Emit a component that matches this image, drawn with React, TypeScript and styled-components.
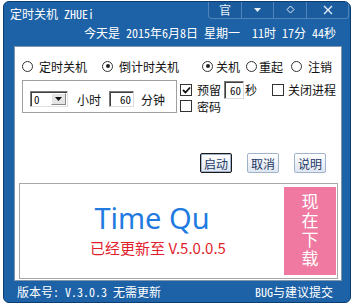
import React from "react";
import styled, { createGlobalStyle } from "styled-components";

const FONT = `"Noto Sans Mono CJK SC", "Noto Sans CJK SC", "DejaVu Sans Mono", monospace`;

const Global = createGlobalStyle`
  html, body { margin: 0; padding: 0; background: #ffffff; }
  body { font-family: ${FONT}; font-size: 12px; }
  * { box-sizing: border-box; }
`;

const Window = styled.div`
  margin: 1px 0 0 3px;
  width: 348px;
  height: 302px;
  background: #1d62a7;
  border: 1px solid #0c3d70;
  border-radius: 6px 7px 6px 6px;
  display: flex;
  flex-direction: column;
  overflow: hidden;
  color: #fff;
`;

const TitleBar = styled.div`
  display: flex;
  height: 21px;
`;

const Title = styled.div`
  padding: 1px 0 0 6px;
  line-height: 21px;
  font-size: 12px;
`;

const CtrlGroup = styled.div`
  margin-left: auto;
  margin-right: 1px;
  margin-top: -2px;
  height: 19px;
  display: flex;
  border: 1px solid #4f84bb;
  border-top: none;
  border-radius: 0 0 3px 4px;
  background: #1b5c9e;
`;

const CtrlBtn = styled.div<{ $w: number; $last?: boolean }>`
  width: ${(p) => p.$w}px;
  display: flex;
  align-items: center;
  justify-content: center;
  border-right: ${(p) => (p.$last ? "none" : "1px solid #4f84bb")};
  font-size: 12px;
  color: #e8f0fa;
  padding-top: 1px;
`;

const DateRow = styled.div`
  height: 23px;
  line-height: 20px;
  text-align: right;
  padding-right: 14px;
  white-space: pre;
`;

const Panel = styled.div`
  margin: 0 8px 0 10px;
  height: 235px;
  background: #fff;
  border: 1px solid #7f96ad;
  color: #111;
  display: flex;
  flex-direction: column;
`;

const RadioRow = styled.div`
  display: flex;
  align-items: center;
  height: 14px;
  margin-top: 12px;
  padding-left: 7px;
`;

const Option = styled.label<{ $ml?: number; $gap?: number }>`
  display: flex;
  align-items: center;
  gap: ${(p) => p.$gap ?? 5}px;
  margin-left: ${(p) => p.$ml ?? 0}px;
  white-space: pre;
`;

const RadioDot = styled.span<{ $on?: boolean }>`
  width: 11px;
  height: 11px;
  border-radius: 50%;
  border: 1px solid #333;
  background: #fff;
  display: flex;
  align-items: center;
  justify-content: center;
  &::after {
    content: "";
    width: 4px;
    height: 4px;
    border-radius: 50%;
    background: ${(p) => (p.$on ? "#222" : "transparent")};
  }
`;

const MiddleRow = styled.div`
  display: flex;
  margin-top: 7px;
  height: 34px;
`;

const GroupBox = styled.div`
  margin-left: 7px;
  width: 155px;
  height: 33px;
  border: 1px solid #a0a0a0;
  box-shadow: inset 1px 1px 0 #fff, 1px 1px 0 #fff;
  display: flex;
  align-items: center;
  padding: 5px 0 0 7px;
`;

const Select = styled.div`
  width: 38px;
  height: 16px;
  display: flex;
  border: 1px solid #7a7a7a;
  border-right-color: #e0e0e0;
  border-bottom-color: #e0e0e0;
  box-shadow: inset 1px 1px 0 #404040;
  background: #fff;
`;

const SelectVal = styled.span`
  flex: 1;
  padding-left: 3px;
  line-height: 14px;
  font-size: 11px;
`;

const SelectArrow = styled.span`
  width: 15px;
  margin: 1px 1px 1px 0;
  background: #e4e4e4;
  border: 1px solid #fff;
  border-right-color: #888;
  border-bottom-color: #888;
  display: flex;
  align-items: center;
  justify-content: center;
`;

const Label = styled.span<{ $ml?: number }>`
  margin-left: ${(p) => p.$ml ?? 0}px;
  white-space: pre;
`;

const Field = styled.span<{ $w: number; $h: number; $ml?: number }>`
  width: ${(p) => p.$w}px;
  height: ${(p) => p.$h}px;
  margin-left: ${(p) => p.$ml ?? 0}px;
  border: 1px solid #7a7a7a;
  border-right-color: #ddd;
  border-bottom-color: #ddd;
  box-shadow: inset 1px 1px 0 #404040;
  display: flex;
  align-items: center;
  justify-content: flex-end;
  padding-right: 2px;
  font-size: 11px;
  background: #fff;
`;

const RightCol = styled.div`
  margin-left: 3px;
  display: flex;
  flex-direction: column;
`;

const CheckRow = styled.div<{ $h: number }>`
  height: ${(p) => p.$h}px;
  display: flex;
  align-items: center;
`;

const Box = styled.span<{ $ml?: number }>`
  width: 12px;
  height: 12px;
  margin-left: ${(p) => p.$ml ?? 0}px;
  border: 1px solid #333;
  background: #fff;
  display: flex;
  align-items: center;
  justify-content: center;
`;

const ButtonRow = styled.div`
  display: flex;
  justify-content: flex-end;
  gap: 15px;
  padding-right: 15px;
  margin-top: 39px;
`;

const Btn = styled.div<{ $default?: boolean }>`
  width: 32px;
  height: 20px;
  display: flex;
  align-items: center;
  justify-content: center;
  font-size: 12px;
  color: #1e3866;
  background: linear-gradient(#ffffff, #dfe6f0);
  border: 1px solid ${(p) => (p.$default ? "#1a1a1a" : "#9fb3cc")};
  box-shadow: ${(p) => (p.$default ? "inset 0 0 0 1px #9fb3cc" : "none")};
  border-radius: 2px;
`;

const AdBox = styled.div`
  margin: 10px 3px 0 4px;
  height: 96px;
  border: 1px solid #a8a8a8;
  display: flex;
  background: #fff;
`;

const AdMain = styled.div`
  flex: 1;
  display: flex;
  flex-direction: column;
  align-items: center;
`;

const AdTitle = styled.div`
  margin-top: 17px;
  font-family: "Noto Sans", "Open Sans", sans-serif;
  font-size: 29px;
  line-height: 34px;
  color: #1f7be0;
`;

const AdSub = styled.div`
  margin-top: 5px;
  padding-left: 12px;
  font-family: "Noto Sans CJK SC", sans-serif;
  font-size: 15px;
  line-height: 16px;
  color: #e21d2c;
`;

const Download = styled.div`
  width: 52px;
  margin: 3px 1px 3px 0;
  background: #ef79a0;
  display: flex;
  justify-content: center;
  align-items: flex-start;
  padding-top: 6px;
`;

const VText = styled.span`
  color: #fff;
  font-family: "Noto Sans CJK SC", sans-serif;
  font-size: 17px;
  line-height: 19px;
  writing-mode: vertical-rl;
  text-orientation: upright;
  letter-spacing: 2px;
`;

const StatusBar = styled.div`
  flex: 1;
  display: flex;
  justify-content: space-between;
  align-items: center;
  padding: 0 17px 1px 13px;
  white-space: pre;
`;

const Tri = () => (
  <svg width="7" height="4" viewBox="0 0 7 4">
    <path d="M0 0 H7 L3.5 4 Z" fill="#e8f0fa" />
  </svg>
);

const Diamond = () => (
  <svg width="9" height="9" viewBox="0 0 9 9">
    <path d="M4.5 1 L8 4.5 L4.5 8 L1 4.5 Z" fill="none" stroke="#e8f0fa" strokeWidth="1" />
  </svg>
);

const Cross = () => (
  <svg width="10" height="10" viewBox="0 0 10 10">
    <path d="M1 1 L9 9 M9 1 L1 9" stroke="#e8f0fa" strokeWidth="1.3" />
  </svg>
);

const DownArrow = () => (
  <svg width="7" height="4" viewBox="0 0 7 4">
    <path d="M0 0 H7 L3.5 4 Z" fill="#111" />
  </svg>
);

const Tick = () => (
  <svg width="9" height="8" viewBox="0 0 9 8">
    <path d="M1 4 L3.5 6.5 L8 1.5" fill="none" stroke="#111" strokeWidth="1.8" />
  </svg>
);

export default function App() {
  return (
    <>
      <Global />
      <Window>
        <TitleBar>
          <Title>定时关机 ZHUEi</Title>
          <CtrlGroup>
            <CtrlBtn $w={33}>官</CtrlBtn>
            <CtrlBtn $w={32}>
              <Tri />
            </CtrlBtn>
            <CtrlBtn $w={33}>
              <Diamond />
            </CtrlBtn>
            <CtrlBtn $w={41} $last>
              <Cross />
            </CtrlBtn>
          </CtrlGroup>
        </TitleBar>
        <DateRow>今天是 2015年6月8日 星期一  11时 17分 44秒</DateRow>
        <Panel>
          <RadioRow>
            <Option $gap={6}>
              <RadioDot />
              定时关机
            </Option>
            <Option $ml={15} $gap={6}>
              <RadioDot $on />
              倒计时关机
            </Option>
            <Option $ml={23} $gap={3}>
              <RadioDot $on />
              关机
            </Option>
            <Option $ml={6} $gap={2}>
              <RadioDot />
              重起
            </Option>
            <Option $ml={8} $gap={6}>
              <RadioDot />
              注销
            </Option>
          </RadioRow>
          <MiddleRow>
            <GroupBox>
              <Select>
                <SelectVal>0</SelectVal>
                <SelectArrow>
                  <DownArrow />
                </SelectArrow>
              </Select>
              <Label $ml={9}>小时</Label>
              <Field $w={25} $h={16} $ml={8}>60</Field>
              <Label $ml={7}>分钟</Label>
            </GroupBox>
            <RightCol>
              <CheckRow $h={19}>
                <Box>
                  <Tick />
                </Box>
                <Label $ml={5}>预留</Label>
                <Field $w={20} $h={18} $ml={3}>60</Field>
                <Label $ml={1}>秒</Label>
                <Box $ml={15} />
                <Label $ml={4}>关闭进程</Label>
              </CheckRow>
              <CheckRow $h={14}>
                <Box />
                <Label $ml={5}>密码</Label>
              </CheckRow>
            </RightCol>
          </MiddleRow>
          <ButtonRow>
            <Btn $default>启动</Btn>
            <Btn>取消</Btn>
            <Btn>说明</Btn>
          </ButtonRow>
          <AdBox>
            <AdMain>
              <AdTitle>Time Qu</AdTitle>
              <AdSub>已经更新至 V.5.0.0.5</AdSub>
            </AdMain>
            <Download>
              <VText>现在下载</VText>
            </Download>
          </AdBox>
        </Panel>
        <StatusBar>
          <span>版本号: V.3.0.3 无需更新</span>
          <span>BUG与建议提交</span>
        </StatusBar>
      </Window>
    </>
  );
}
